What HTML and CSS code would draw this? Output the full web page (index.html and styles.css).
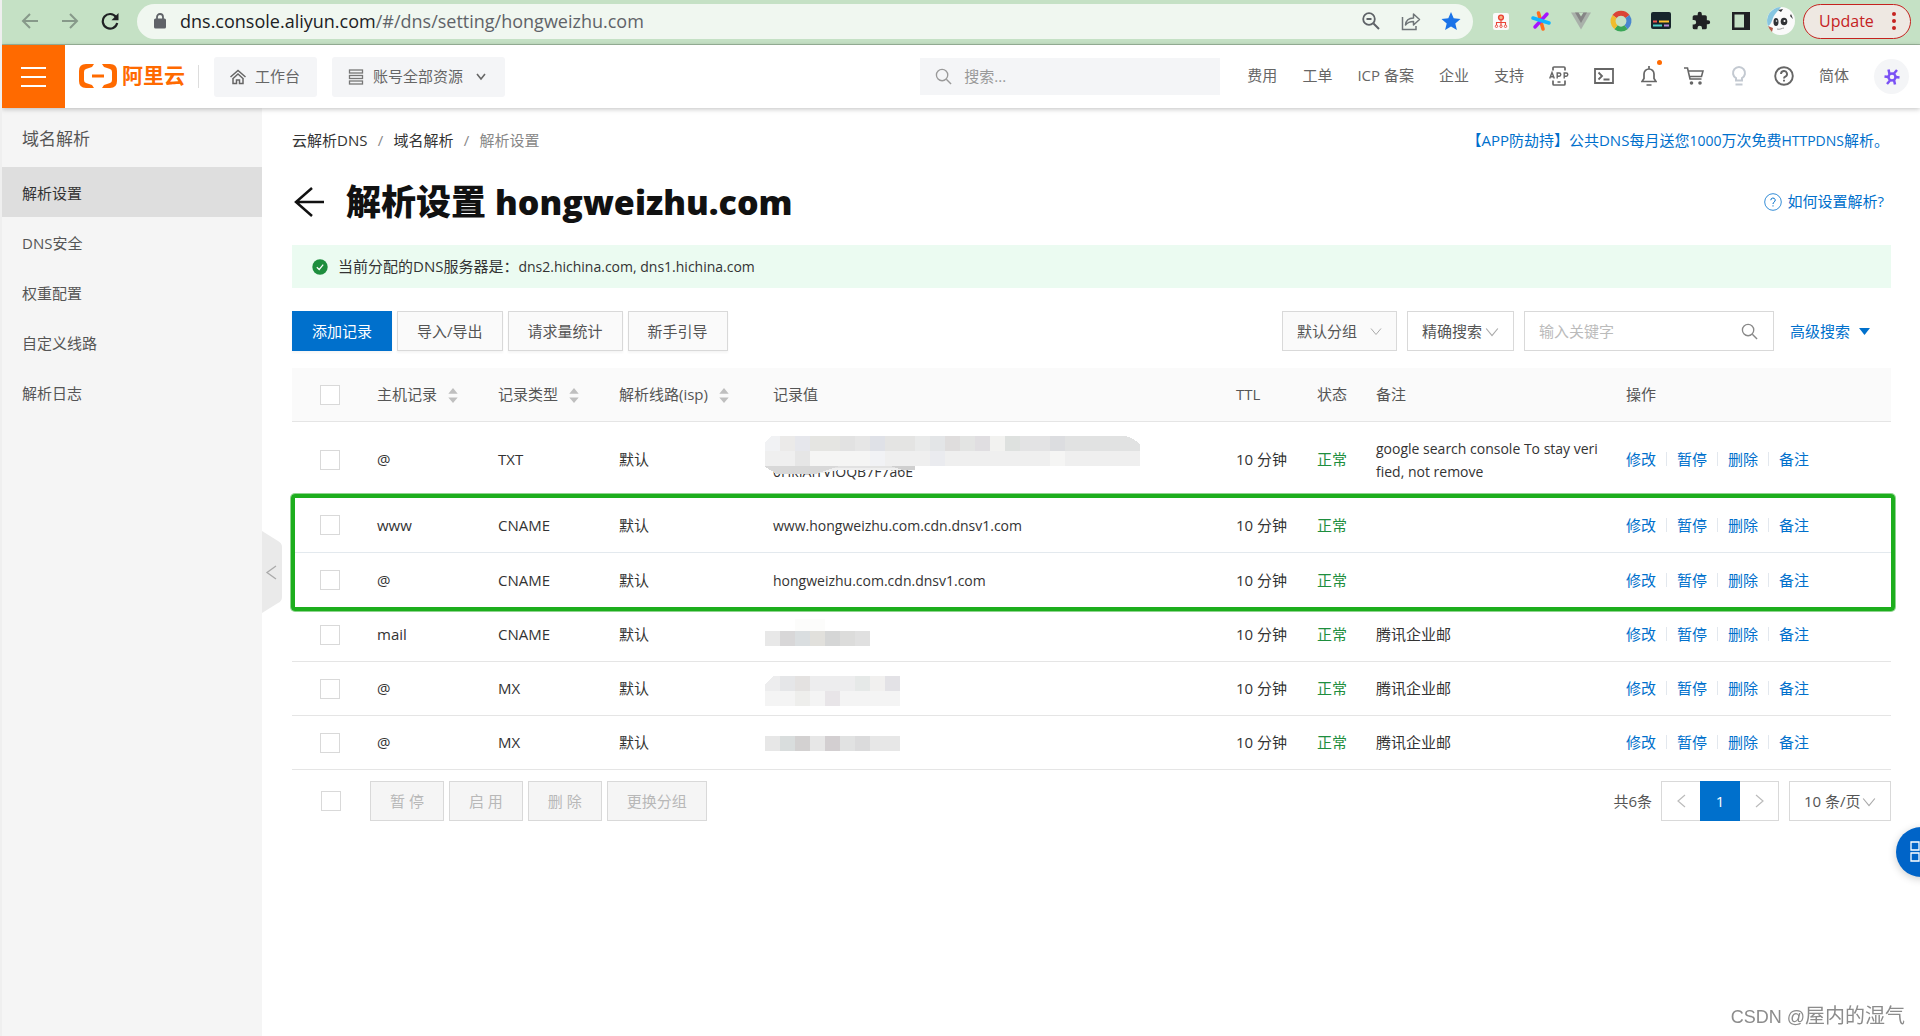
FILE: index.html
```html
<!DOCTYPE html>
<html lang="zh-CN">
<head>
<meta charset="utf-8">
<title>解析设置 hongweizhu.com</title>
<link rel="stylesheet" href="styles.css">
</head>
<body>
<svg class="defs" aria-hidden="true">
  <symbol id="chev" viewBox="0 0 12 8"><path d="M1 1l5 6 5-6" fill="none" stroke="currentColor" stroke-width="1"/></symbol>
  <symbol id="sort" viewBox="0 0 10 16"><path d="M5 0l5 6H0zM5 16l5-6H0z" fill="#bfbfbf"/></symbol>
  <symbol id="mag" viewBox="0 0 18 18"><circle cx="7.5" cy="7.5" r="6" fill="none" stroke="currentColor" stroke-width="1.4"/><path d="M12 12l5 5" stroke="currentColor" stroke-width="1.5"/></symbol>
</svg>

<div class="browser">
  <button class="nav-btn dim" aria-label="Back"><svg width="18" height="18" viewBox="0 0 18 18"><path d="M17 9H2M9 2L2 9l7 7" fill="none" stroke="currentColor" stroke-width="2"/></svg></button>
  <button class="nav-btn dim" aria-label="Forward"><svg width="18" height="18" viewBox="0 0 18 18"><path d="M1 9h15M9 2l7 7-7 7" fill="none" stroke="currentColor" stroke-width="2"/></svg></button>
  <button class="nav-btn" aria-label="Reload"><svg width="18" height="18" viewBox="0 0 18 18"><path d="M15 5a7.300 7.300 0 1 0 1.200 6" fill="none" stroke="currentColor" stroke-width="2.200"/><path d="M17.500 1v7.200h-7z" fill="currentColor"/></svg></button>
  <div class="omnibox">
    <svg class="lock" width="12" height="16" viewBox="0 0 12 16"><rect x="0" y="5.500" width="12" height="10" rx="1.500" fill="#5f6368"/><path d="M3 6V4a3 3 0 0 1 6 0v2" fill="none" stroke="#5f6368" stroke-width="1.800"/></svg>
    <p class="url"><b>dns.console.aliyun.com</b>/#/dns/setting/hongweizhu.com</p>
    <button class="ext" aria-label="Zoom"><svg width="18" height="18" viewBox="0 0 18 18"><circle cx="7" cy="7" r="5.800" fill="none" stroke="#5f6368" stroke-width="1.800"/><path d="M4.500 7h5M11.500 11.500l5.500 5.500" stroke="#5f6368" stroke-width="2"/></svg></button>
    <button class="ext" aria-label="Share"><svg width="20" height="20" viewBox="0 0 20 20"><path d="M1.500 6v12.500H15V15" fill="none" stroke="#6f7578" stroke-width="1.500"/><path d="M4.500 14c.5-5 3.500-7 8-7V3l6 5.500-6 5.500v-3.500c-4 0-6 1-8 3.500z" fill="none" stroke="#6f7578" stroke-width="1.500" stroke-linejoin="round"/></svg></button>
    <button class="ext" aria-label="Bookmark"><svg width="20" height="20" viewBox="0 0 20 20"><path d="M10 1l2.700 6.300 6.800.6-5.200 4.500 1.600 6.700L10 15.500 4.100 19.100l1.600-6.700L.5 7.900l6.800-.6z" fill="#1a73e8"/></svg></button>
  </div>
  <div class="extensions">
    <button class="ext" aria-label="Sitemap"><svg width="20" height="20" viewBox="0 0 20 20"><rect x="2" y="2" width="16" height="17" rx="2" fill="#fafafa"/><circle cx="10" cy="6.500" r="2.400" fill="#f4b183" stroke="#ea4335" stroke-width="1.400"/><path d="M10 9v5M5.500 14v-2.500h9V14" fill="none" stroke="#ea4335" stroke-width="1.100"/><g fill="none" stroke="#ea4335" stroke-width=".9"><circle cx="5.500" cy="15.300" r="1.200"/><circle cx="10" cy="15.300" r="1.200"/><circle cx="14.500" cy="15.300" r="1.200"/></g></svg></button>
    <button class="ext" aria-label="Asterisk"><svg width="20" height="20" viewBox="0 0 20 20" stroke-width="3.500" stroke-linecap="round"><path d="M7.500 2l4.500 16" stroke="#ff6d1f"/><path d="M16 3L4 16" stroke="#a712ff"/><path d="M2 7l16 5" stroke="#12b5ff"/></svg></button>
    <button class="ext" aria-label="Vue devtools"><svg width="20" height="20" viewBox="0 0 20 20"><path d="M0 1.500h20L10 18.500z" fill="#a9b1aa"/><path d="M4 1.500h12L10 12z" fill="#858585"/><path d="M7.500 1.500h5L10 5.500z" fill="#c5e1c5"/></svg></button>
    <button class="ext" aria-label="Colour ring"><svg width="22" height="22" viewBox="0 0 22 22" fill="none" stroke-width="5"><path d="M4.500 6.500a8 8 0 0 1 13 0" stroke="#db4437"/><path d="M17.500 6.500a8 8 0 0 1-1.500 10.800" stroke="#4a86cf"/><path d="M16 17.300a8 8 0 0 1-10 0" stroke="#3aa757"/><path d="M6 17.300A8 8 0 0 1 4.500 6.500" stroke="#f0bc2e"/></svg></button>
    <button class="ext" aria-label="Subtitles"><svg width="20" height="18" viewBox="0 0 20 18"><rect width="20" height="17" rx="2" fill="#17252c"/><path d="M2 9.500h4" stroke="#ef5350" stroke-width="2"/><path d="M8 9.500h10" stroke="#ffc42e" stroke-width="2"/><path d="M2 13.500h9" stroke="#4dd0c8" stroke-width="2"/><path d="M13 13.500h5" stroke="#b58ad6" stroke-width="2"/></svg></button>
    <button class="ext" aria-label="Extensions"><svg width="20" height="20" viewBox="0 0 24 24"><path d="M20.500 11H19V7a2 2 0 0 0-2-2h-4V3.500a2.500 2.500 0 0 0-5 0V5H4a2 2 0 0 0-2 2v3.800h1.500a2.700 2.700 0 0 1 0 5.400H2V20a2 2 0 0 0 2 2h3.800v-1.500a2.700 2.700 0 0 1 5.400 0V22H17a2 2 0 0 0 2-2v-4h1.500a2.500 2.500 0 0 0 0-5z" fill="#202124"/></svg></button>
    <button class="ext" aria-label="Side panel"><svg width="18" height="18" viewBox="0 0 18 18"><path d="M0 0h18v18H0zM2.500 2.500v13H12v-13z" fill="#202124" fill-rule="evenodd"/></svg></button>
    <button class="ext" aria-label="Profile"><svg width="28" height="28" viewBox="0 0 28 28"><circle cx="14" cy="14" r="14" fill="#fafafa"/><path d="M14 0A14 14 0 0 0 1 19c4-1 4-9 8-13z" fill="#86c5e0"/><path d="M1 19a14 14 0 0 0 4 6l1-4z" fill="#b55a48"/><ellipse cx="9" cy="15" rx="2.500" ry="4" fill="#303235"/><ellipse cx="17" cy="14.500" rx="3.300" ry="3.800" fill="#303235"/><circle cx="17.500" cy="14" r="1" fill="#fff"/><circle cx="9.500" cy="14" r=".8" fill="#fff"/><path d="M11 3l5-1-2 3zM24 7l2 5-3-3z" fill="#303235"/><path d="M10 22c3 1 5-1 7-1" fill="none" stroke="#999"/></svg></button>
  </div>
  <button class="update">Update<svg width="4" height="18" viewBox="0 0 4 18"><g fill="#c5221f"><circle cx="2" cy="2" r="2"/><circle cx="2" cy="9" r="2"/><circle cx="2" cy="16" r="2"/></g></svg></button>
</div>

<header class="topbar">
  <button class="burger" aria-label="菜单"><i></i><i></i><i></i></button>
  <a class="logo" href="#"><svg width="38" height="24" viewBox="0 0 38 24" fill="#ff6a00"><path d="M15 0H7Q0 0 0 7v10q0 7 7 7h8l-2-3-6-2q-2-.6-2-3V8q0-2.400 2-3l6-2zM23 0h8q7 0 7 7v10q0 7-7 7h-8l2-3 6-2q2-.6 2-3V8q0-2.400-2-3l-6-2zM13 10.500h12v3H13z"/></svg><span>阿里云</span></a>
  <span class="rule"></span>
  <button class="chip"><svg width="16" height="16" viewBox="0 0 16 16" fill="none" stroke="#666" stroke-width="1.500"><path d="M.5 8L8 1.500 15.500 8M2.500 10L8 5l5.500 5M3 9v5.500h3.500V11h3v3.500H13V9"/></svg>工作台</button>
  <button class="chip wide"><svg width="16" height="16" viewBox="0 0 16 16" fill="none" stroke="#777" stroke-width="1.300"><rect x="1.500" y="1" width="13" height="3"/><rect x="1.500" y="6.500" width="13" height="3"/><rect x="1.500" y="12" width="13" height="3"/></svg>账号全部资源<svg class="arrow" width="10" height="8" viewBox="0 0 10 8"><path d="M1 1l4 5 4-5" fill="none" stroke="#666" stroke-width="1.600"/></svg></button>
  <label class="search"><svg width="17" height="17"><use href="#mag"/></svg><input type="search" placeholder="搜索..." aria-label="搜索"></label>
  <nav class="topnav">
    <a href="#">费用</a><a href="#">工单</a><a href="#">ICP 备案</a><a href="#">企业</a><a href="#">支持</a>
    <a href="#" class="ic" aria-label="APP"><svg width="20" height="20" viewBox="0 0 20 20" fill="none" stroke="#666"><path d="M4 4.500V2q0-1 1-1h10q1 0 1 1v2.500M4 14.500V18q0 1 1 1h10q1 0 1-1v-3.500M8.500 16h3" stroke-width="1.700"/><path d="M.7 12.500L3 6.500l2.300 6M1.500 10.700h3M8.200 12.500V7h2q1.600 0 1.600 1.600t-1.600 1.600h-2M15.200 12.500V7h2q1.600 0 1.600 1.600t-1.600 1.600h-2" stroke-width="1.400"/></svg></a>
    <a href="#" class="ic" aria-label="终端"><svg width="20" height="16" viewBox="0 0 20 16" fill="none" stroke="#666" stroke-width="1.800"><path d="M1 1h18v14H1zM4.500 4.500L8 8l-3.500 3.500M9.500 11.500h6"/></svg></a>
    <a href="#" class="ic bell" aria-label="通知"><svg width="16" height="20" viewBox="0 0 16 20" fill="none" stroke="#666" stroke-width="1.700"><path d="M1 15.500h14l-2-3V8a5 5 0 0 0-10 0v4.500zM8 3V0M5.500 19h5"/></svg></a>
    <a href="#" class="ic" aria-label="购物车"><svg width="20" height="18" viewBox="0 0 20 18" fill="none" stroke="#666" stroke-width="1.600"><path d="M0 1h3.500L6 12h11.500M4 4h15l-1.500 5.500H5.500"/><circle cx="7.500" cy="16" r="1" fill="#666"/><circle cx="16" cy="16" r="1" fill="#666"/></svg></a>
    <a href="#" class="ic" aria-label="提示"><svg width="16" height="20" viewBox="0 0 16 20" fill="none" stroke="#c3c9d1" stroke-width="2"><path d="M5 14.500v-2.300a6 6 0 1 1 6 0v2.300zM4.500 18.500h7"/></svg></a>
    <a href="#" class="ic" aria-label="帮助"><svg width="20" height="20" viewBox="0 0 20 20" fill="none" stroke="#666" stroke-width="1.900"><circle cx="10" cy="10" r="8.800"/><path d="M7 8a3 3 0 1 1 4.300 2.700Q10 11.300 10 12.500M10 13.800v1.800"/></svg></a>
    <a href="#">简体</a>
  </nav>
  <a href="#" class="account" aria-label="账号"><svg width="16" height="16" viewBox="0 0 16 16" fill="none" stroke="#7b52f5" stroke-width="2.500"><circle cx="8" cy="8" r="3.500"/><path d="M5.500 5L4.500.5M10 4.500L13 1M11.500 8l4 .5M10 11l1 4.500M6 11.500L3 15M4.500 8L.5 7.500"/></svg></a>
</header>

<div class="layout">
  <aside class="sidebar">
    <h2>域名解析</h2>
    <nav>
      <a href="#" class="active">解析设置</a>
      <a href="#">DNS安全</a>
      <a href="#">权重配置</a>
      <a href="#">自定义线路</a>
      <a href="#">解析日志</a>
    </nav>
    <button class="collapse" aria-label="收起"><svg width="20" height="82" viewBox="0 0 20 82"><path d="M0 0l16 10q4 2 4 6v50q0 4-4 6L0 82z" fill="#eaeaea"/><path d="M14 35l-9 6.500 9 6.500" fill="none" stroke="#aaa" stroke-width="1.300"/></svg></button>
  </aside>

  <main>
    <div class="line crumbs-line">
      <nav class="crumbs"><a href="#">云解析DNS</a><i>/</i><a href="#">域名解析</a><i>/</i><span>解析设置</span></nav>
      <a class="promo" href="#">【APP防劫持】公共DNS每月送您<span class="latin">1000</span>万次免费<span class="latin">HTTPDNS</span>解析。</a>
    </div>
    <div class="line title-line">
      <a href="#" class="back" aria-label="返回"><svg width="30" height="30" viewBox="0 0 30 30"><path d="M30 15H2M18 1L2 15l16 14" fill="none" stroke="#111" stroke-width="2.500"/></svg></a>
      <h1>解析设置 <span>hongweizhu.com</span></h1>
      <a class="how" href="#"><svg width="18" height="18" viewBox="0 0 18 18" fill="none" stroke="#0070cc"><circle cx="9" cy="9" r="8.300" stroke-width=".8"/><path d="M6.800 7.200a2.200 2.200 0 1 1 3.200 2Q9 9.700 9 11M9 12.300v1.200"/></svg>如何设置解析?</a>
    </div>
    <div class="notice"><svg width="16" height="16" viewBox="0 0 16 16"><circle cx="8" cy="8" r="7.700" fill="#1e8e3e"/><path d="M4.800 8.200l2.400 2.300 4-4.800" fill="none" stroke="#fff" stroke-width="1.200"/></svg><p>当前分配的DNS服务器是：<span class="latin">dns2.hichina.com, dns1.hichina.com</span></p></div>

    <div class="toolbar">
      <button class="btn primary">添加记录</button>
      <button class="btn">导入/导出</button>
      <button class="btn">请求量统计</button>
      <button class="btn">新手引导</button>
      <div class="filters">
        <span class="pick group"><select aria-label="分组"><option>默认分组</option></select><svg width="12" height="9"><use href="#chev"/></svg></span>
        <span class="pick exact"><select aria-label="搜索方式"><option>精确搜索</option></select><svg width="14" height="10"><use href="#chev"/></svg></span>
        <label class="keyword"><input type="text" placeholder="输入关键字" aria-label="关键字"><svg width="17" height="17"><use href="#mag"/></svg></label>
        <button class="advanced">高级搜索<svg width="11" height="7" viewBox="0 0 11 7"><path d="M0 0h11L5.500 7z" fill="#0070cc"/></svg></button>
      </div>
    </div>

    <table>
      <colgroup><col class="c-check"><col class="c-host"><col class="c-host"><col class="c-isp"><col><col class="c-ttl"><col class="c-state"><col class="c-note"><col class="c-ops"></colgroup>
      <thead>
        <tr><th><input type="checkbox" aria-label="全选"></th><th>主机记录<svg class="sort" width="10" height="15"><use href="#sort"/></svg></th><th>记录类型<svg class="sort" width="10" height="15"><use href="#sort"/></svg></th><th>解析线路(isp)<svg class="sort" width="10" height="15"><use href="#sort"/></svg></th><th>记录值</th><th>TTL</th><th>状态</th><th>备注</th><th>操作</th></tr>
      </thead>
      <tbody class="first">
        <tr><td><input type="checkbox" aria-label="选择 TXT"></td><td>@</td><td>TXT</td><td>默认</td>
          <td class="latin"><div class="masked">0HkIAITVIOQB7F7a6E<svg width="375" height="40" viewBox="0 0 375 40" shape-rendering="crispEdges">
            <path d="M6 0h354q10 2 15 9v21H150v4H75l-25 4H12L0 31V6z" fill="#efefef"/>
            <path d="M0 6l6-6h9v15H0z" fill="#f1f2f4"/><path d="M15 0h15v15H15z" fill="#ebeae9"/><path d="M30 0h15v15H30z" fill="#e6e7ec"/><path d="M45 0h30v15H45z" fill="#e5e5e2"/><path d="M75 0h15v15H75z" fill="#e2e2e2"/><path d="M90 0h15v15H90z" fill="#e6e6e6"/><path d="M105 0h15v15h-15z" fill="#dfe1e7"/><path d="M120 0h30v15h-30z" fill="#e4e4e3"/><path d="M150 0h15v15h-15z" fill="#e9eaea"/><path d="M165 0h15v15h-15z" fill="#e3e5e7"/><path d="M180 0h15v15h-15z" fill="#dfdddd"/><path d="M195 0h15v15h-15z" fill="#e3e4e3"/><path d="M210 0h15v15h-15z" fill="#e0dee1"/><path d="M225 0h15v15h-15z" fill="#f2f2f0"/><path d="M240 0h15v15h-15z" fill="#dee1df"/><path d="M255 0h30v15h-30z" fill="#e3e3e4"/><path d="M285 0h15v15h-15z" fill="#dcdde0"/><path d="M300 0h60q10 2 15 9v6h-75z" fill="#e1e2e2"/>
            <path d="M30 15h15v15H30z" fill="#e6e6e6"/><path d="M45 15h60v15H45z" fill="#f5f5f4"/><path d="M105 15h15v15h-15z" fill="#f1f2f5"/><path d="M165 15h15v15h-15z" fill="#eaebef"/><path d="M285 15h15v15h-15z" fill="#f5f5f4"/>
            <path d="M0 30h75L50 38H12L0 31z" fill="#d8d8d8"/><path d="M75 30h60v2H68z" fill="#e2e2e2"/><path d="M125 30h25v4h-12z" fill="#cfcfcf"/></svg></div></td>
          <td>10 分钟</td><td class="ok">正常</td><td class="latin">google search console To stay veri<br>fied, not remove</td><td class="ops"><a href="#">修改</a><a href="#">暂停</a><a href="#">删除</a><a href="#">备注</a></td></tr>
      </tbody>
      <tbody class="highlight">
        <tr><td><input type="checkbox" aria-label="选择 www"></td><td>www</td><td>CNAME</td><td>默认</td><td class="latin">www.hongweizhu.com.cdn.dnsv1.com</td><td>10 分钟</td><td class="ok">正常</td><td></td><td class="ops"><a href="#">修改</a><a href="#">暂停</a><a href="#">删除</a><a href="#">备注</a></td></tr>
        <tr><td><input type="checkbox" aria-label="选择 @"></td><td>@</td><td>CNAME</td><td>默认</td><td class="latin">hongweizhu.com.cdn.dnsv1.com</td><td>10 分钟</td><td class="ok">正常</td><td></td><td class="ops"><a href="#">修改</a><a href="#">暂停</a><a href="#">删除</a><a href="#">备注</a></td></tr>
      </tbody>
      <tbody>
        <tr><td><input type="checkbox" aria-label="选择 mail"></td><td>mail</td><td>CNAME</td><td>默认</td>
          <td><svg class="mosaic" width="135" height="36" shape-rendering="crispEdges"><path d="M30 2h30v12H30z" fill="#fcfcfb"/><path d="M0 14h105v15H0z" fill="#dcdcdb"/><path d="M0 14h15v15H0z" fill="#e8e8e8"/><path d="M15 14h15v15H15z" fill="#d8d7d8"/><path d="M30 14h15v15H30z" fill="#dadee0"/><path d="M45 14h15v15H45z" fill="#e1e0dc"/><path d="M60 14h15v15H60z" fill="#d5d6d6"/><path d="M90 14h15v15H90z" fill="#e0e0e0"/></svg></td>
          <td>10 分钟</td><td class="ok">正常</td><td>腾讯企业邮</td><td class="ops"><a href="#">修改</a><a href="#">暂停</a><a href="#">删除</a><a href="#">备注</a></td></tr>
        <tr><td><input type="checkbox" aria-label="选择 MX 1"></td><td>@</td><td>MX</td><td>默认</td>
          <td><svg class="mosaic" width="135" height="36" shape-rendering="crispEdges"><path d="M8 5h127v15H0v-7z" fill="#ededee"/><path d="M0 20h135v15H0z" fill="#f4f4f4"/><path d="M15 5h15v15H15z" fill="#e5e6e8"/><path d="M30 5h15v15H30z" fill="#e4e2e1"/><path d="M90 5h15v15H90z" fill="#e6e9e8"/><path d="M105 5h15v15h-15z" fill="#f1f0ef"/><path d="M120 5h15v15h-15z" fill="#e3e2e6"/><path d="M30 20h15v15H30z" fill="#eeeeec"/><path d="M60 20h15v15H60z" fill="#e8e5e8"/></svg></td>
          <td>10 分钟</td><td class="ok">正常</td><td>腾讯企业邮</td><td class="ops"><a href="#">修改</a><a href="#">暂停</a><a href="#">删除</a><a href="#">备注</a></td></tr>
        <tr><td><input type="checkbox" aria-label="选择 MX 2"></td><td>@</td><td>MX</td><td>默认</td>
          <td><svg class="mosaic" width="135" height="36" shape-rendering="crispEdges"><path d="M0 11h135v15H0z" fill="#e7e7e7"/><path d="M15 11h15v15H15z" fill="#d9dddd"/><path d="M30 11h15v15H30z" fill="#d3d1d1"/><path d="M60 11h15v15H60z" fill="#d3cfd1"/><path d="M75 11h15v15H75z" fill="#e1e2e2"/><path d="M90 11h15v15H90z" fill="#dbdbdc"/></svg></td>
          <td>10 分钟</td><td class="ok">正常</td><td>腾讯企业邮</td><td class="ops"><a href="#">修改</a><a href="#">暂停</a><a href="#">删除</a><a href="#">备注</a></td></tr>
      </tbody>
    </table>

    <div class="foot">
      <input type="checkbox" aria-label="选择全部">
      <div class="batch"><button class="btn" disabled>暂 停</button><button class="btn" disabled>启 用</button><button class="btn" disabled>删 除</button><button class="btn" disabled>更换分组</button></div>
      <span class="total">共6条</span>
      <div class="pager"><button aria-label="上一页"><svg width="9" height="14" viewBox="0 0 9 14"><path d="M8 1L1 7l7 6" fill="none" stroke="#bbb" stroke-width="1.200"/></svg></button><button class="current">1</button><button aria-label="下一页"><svg width="9" height="14" viewBox="0 0 9 14"><path d="M1 1l7 6-7 6" fill="none" stroke="#bbb" stroke-width="1.200"/></svg></button></div>
      <span class="pick size"><select aria-label="每页条数"><option>10 条/页</option></select><svg width="14" height="10"><use href="#chev"/></svg></span>
    </div>
  </main>
</div>

<button class="float" aria-label="工具"><svg width="22" height="22" viewBox="0 0 22 22" fill="none" stroke="#fff" stroke-width="1.300"><path d="M1 1h8v8H1zM12 1h8v8h-8zM1 12h8v8H1zM12 12h8v8h-8z"/></svg></button>
<p class="watermark"><span>CSDN @</span>屋内的湿气</p>
</body>
</html>
```
FILE: styles.css
```css
* { box-sizing: border-box; }
body {
  margin: 0;
  min-height: 100vh;
  display: flex;
  flex-direction: column;
  border-left: 2px solid #efefef;
  background: #fff;
  color: #333;
  font: 15px/23px "Open Sans", "Noto Sans CJK SC", sans-serif;
  overflow-x: hidden;
}
a { color: inherit; text-decoration: none; }
button, input, select { font: inherit; color: inherit; }
button { border: 0; background: none; padding: 0; cursor: pointer; }
h1, h2, p { margin: 0; }
svg { flex: none; display: block; }
.defs { position: absolute; width: 0; height: 0; }
.latin { font-size: 14px; }

/* browser strip */
.browser {
  display: flex;
  align-items: center;
  height: 45px;
  padding: 0 9px 2px 19px;
  background: #c5e1c5;
  border-bottom: 1px solid #9db79d;
}
.nav-btn { width: 20px; margin-right: 20px; color: #202124; }
.dim { color: #87998a; }
.omnibox {
  flex: 1;
  display: flex;
  align-items: center;
  gap: 20px;
  height: 35px;
  padding: 0 12px 0 17px;
  border-radius: 18px;
  background: #f0f7f0;
}
.nav-btn:nth-child(3) { margin-right: 16px; }
.lock { margin-right: -6px; }
.url { flex: 1; font-size: 18px; color: #5f6368; white-space: nowrap; }
.url b { font-weight: 400; color: #202124; }
.ext { width: 20px; height: 28px; display: flex; align-items: center; justify-content: center; }
.extensions { display: flex; gap: 20px; padding: 0 12px 0 18px; }
.update {
  display: flex;
  align-items: center;
  justify-content: space-between;
  width: 108px;
  height: 35px;
  padding: 0 14px 0 15px;
  border: 1px solid #c5221f;
  border-radius: 18px;
  background: #eee8e2;
  color: #c5221f;
  font-size: 16px;
}

/* console header */
.topbar {
  position: relative;
  z-index: 2;
  display: flex;
  align-items: center;
  height: 63px;
  padding-right: 11px;
  background: #fff;
  box-shadow: 0 1px 5px rgba(0, 0, 0, .25);
  color: #666;
}
.burger { align-self: stretch; width: 63px; padding: 0 19px; background: #ff6a00; display: grid; align-content: center; gap: 7px; }
.burger i { height: 2px; background: #fff; }
.logo { display: flex; align-items: center; gap: 5px; margin-left: 14px; padding-bottom: 2px; color: #ff6a00; font-size: 21px; font-weight: 700; }
.rule { width: 1px; height: 23px; margin: 0 15px 0 13px; background: #ddd; }
.chip { display: flex; align-items: center; gap: 9px; height: 40px; padding: 0 17px 0 16px; border-radius: 3px; background: #f4f5f7; }
.chip + .chip { margin-left: 15px; }
.chip .arrow { margin: 0 2px 0 4px; }
.search { display: flex; align-items: center; gap: 12px; width: 300px; height: 37px; margin-left: auto; padding: 0 15px; background: #f4f5f7; color: #999; }
.search input { flex: 1; min-width: 0; border: 0; padding: 0; background: none; outline: 0; }
input::placeholder { color: #999; }
.topnav { display: flex; align-items: center; gap: 25px; margin: 0 25px 0 27px; padding-bottom: 2px; white-space: nowrap; }
.ic { position: relative; display: flex; justify-content: center; width: 20px; }
.bell::after { content: ""; position: absolute; top: -6px; right: -3px; width: 5px; height: 5px; border-radius: 50%; background: #ff6a00; }
.account { display: grid; place-items: center; width: 35px; height: 35px; border-radius: 50%; background: #f4f5f7; }

/* page */
.layout { flex: 1; display: flex; }
.sidebar { position: relative; flex: none; width: 260px; background: #f5f5f5; color: #555; }
.sidebar h2 { padding: 19px 20px 17px; font-size: 17px; line-height: 23px; font-weight: 400; }
.sidebar nav a { display: block; padding: 15px 20px 12px; }
.sidebar nav .active { background: #dedede; color: #333; }
.collapse { position: absolute; left: 100%; top: 423px; }
main { flex: 1; min-width: 0; padding: 21px 29px 0 30px; }
.line { display: flex; align-items: center; }
.crumbs { display: flex; }
.crumbs i { width: 26px; text-align: center; color: #888; font-style: normal; }
.crumbs span { color: #888; }
.promo { margin-left: auto; margin-right: 2px; color: #0070cc; }
.title-line { height: 93px; padding-top: 6px; }
.back { margin: 0 22px 0 2px; }
h1 { font-size: 35px; line-height: 48px; font-weight: 800; color: #111; }
h1 span { font-size: 34px; }
.how { display: flex; align-items: center; gap: 6px; margin-left: auto; margin-right: 7px; color: #0070cc; }
.notice { display: flex; align-items: center; gap: 10px; padding: 10px 20px; background: #ebfbf1; }

.toolbar { display: flex; align-items: center; gap: 5px; margin: 23px 0 17px; }
.btn { height: 40px; padding: 0 19px; border: 1px solid #d9d9d9; background: #fafafa; color: #555; box-shadow: 0 2px 2px rgba(0, 0, 0, .04); white-space: nowrap; }
.btn.primary { background: #0070cc; border-color: #0070cc; color: #fff; }
.btn:disabled { background: #f5f5f5; color: #b8b8b8; box-shadow: none; }
.filters { display: flex; align-items: center; gap: 10px; margin-left: auto; padding-right: 21px; }
.pick { position: relative; }
.pick select { display: block; width: 100%; height: 40px; padding: 0 14px; border: 1px solid #d9d9d9; border-radius: 0; background: #fff; color: #555; appearance: none; }
.pick svg { position: absolute; top: 16px; right: 15px; color: #aaa; pointer-events: none; }
.group { width: 115px; }
.group select { background: #fafafa; }
.exact { width: 107px; }
.size { width: 102px; }
.keyword { display: flex; align-items: center; width: 250px; height: 40px; padding: 0 15px 0 14px; border: 1px solid #d9d9d9; color: #888; }
.keyword input { flex: 1; min-width: 0; border: 0; padding: 0; outline: 0; }
.keyword input::placeholder { color: #bbb; }
.advanced { display: flex; align-items: center; gap: 9px; margin-left: 6px; color: #0070cc; }

table { width: 100%; table-layout: fixed; border-collapse: separate; border-spacing: 0; }
.c-check { width: 69px; }
.c-host { width: 121px; }
.c-isp { width: 154px; }
.c-ttl { width: 81px; }
.c-state { width: 59px; }
.c-note { width: 250px; }
.c-ops { width: 281px; }
th, td { height: 54px; padding: 0 0 0 16px; border-bottom: 1px solid #e5e5e5; text-align: left; font-weight: 400; white-space: nowrap; }
th { background: #fafafa; color: #555; }
th:first-child, td:first-child { padding-left: 28px; }
input[type="checkbox"] { display: block; flex: none; width: 20px; height: 20px; margin: 0; border: 1px solid #d9d9d9; background: #fff; appearance: none; }
.sort { display: inline-block; margin-left: 11px; vertical-align: -3px; }
.first td { height: 76px; }
.highlight { position: relative; }
.highlight td { height: 55px; border-color: #e3e9ee; }
.highlight::after { content: ""; position: absolute; inset: -4px -4px -3px -1px; border: 4px solid #1dae1d; border-radius: 4px; box-shadow: 0 0 0 1px #8fd48f; pointer-events: none; }
.masked { position: relative; padding-top: 23px; }
.masked svg { position: absolute; top: -1px; left: -8px; }
.mosaic { margin-left: -8px; }
.ok { color: #1e8e3e; }
.ops a { color: #0070cc; }
.ops a + a { margin-left: 10px; padding-left: 11px; background: linear-gradient(#e3e8ee, #e3e8ee) 0 50% / 1px 14px no-repeat; }

.foot { display: flex; align-items: center; padding: 11px 0 0 29px; }
.batch { display: flex; gap: 5px; margin-left: 29px; }
.total { margin-left: auto; margin-right: 9px; color: #555; }
.pager { display: flex; margin-right: 10px; border: 1px solid #d9d9d9; }
.pager button { display: grid; place-items: center; width: 38px; height: 38px; }
.pager .current { width: 40px; height: 40px; margin: -1px 0; background: #0070cc; color: #fff; }

.float { position: fixed; right: -26px; top: 827px; width: 50px; height: 50px; border-radius: 50%; background: #0064c8; display: grid; place-items: center; box-shadow: 0 2px 8px rgba(0, 0, 0, .2); }
.watermark { position: fixed; right: 15px; bottom: 4px; font: 20px/30px "Liberation Sans", "Noto Sans CJK SC", sans-serif; color: #8c8c8c; }
.watermark span { font-size: 18px; }
```
